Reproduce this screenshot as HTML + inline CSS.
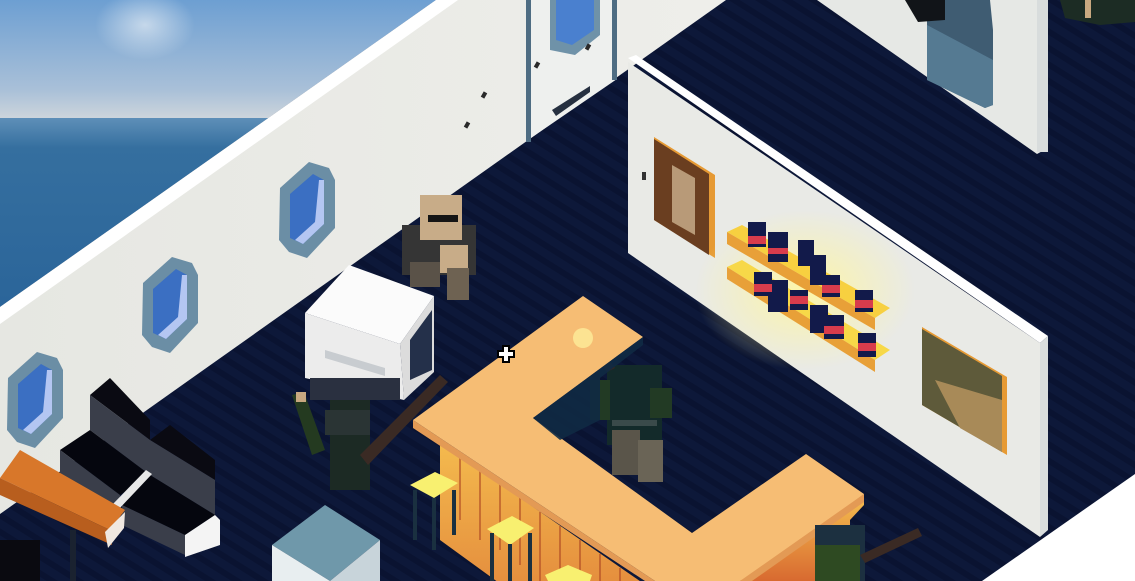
<!DOCTYPE html>
<html><head><meta charset="utf-8"><style>
html,body{margin:0;padding:0;width:1135px;height:581px;overflow:hidden;background:#0c1536}
svg{display:block;overflow:hidden}
</style></head><body>
<svg width="1135" height="581" viewBox="0 0 1135 581" xmlns="http://www.w3.org/2000/svg">
<defs>
<pattern id="fl" patternUnits="userSpaceOnUse" width="14" height="14" patternTransform="rotate(32)">
<rect width="14" height="14" fill="#0d1839"/><rect width="14" height="6" fill="#0a1331"/>
</pattern>
<linearGradient id="sky" x1="0" y1="0" x2="0" y2="1">
<stop offset="0" stop-color="#6d9fd2"/><stop offset="0.75" stop-color="#a9c0d8"/><stop offset="1" stop-color="#cfd6dc"/>
</linearGradient>
<linearGradient id="sea" x1="0" y1="0" x2="0" y2="1">
<stop offset="0" stop-color="#5e8fb8"/><stop offset="0.15" stop-color="#356f9f"/><stop offset="1" stop-color="#2a6499"/>
</linearGradient>
<linearGradient id="wall" x1="0" y1="0" x2="1" y2="0">
<stop offset="0" stop-color="#e6e7e2"/><stop offset="1" stop-color="#eeeeea"/>
</linearGradient>
<radialGradient id="glow" cx="0.5" cy="0.5" r="0.5">
<stop offset="0" stop-color="#fff6a0" stop-opacity="0.9"/><stop offset="1" stop-color="#fff6a0" stop-opacity="0"/>
</radialGradient>
<radialGradient id="cloud" cx="0.5" cy="0.5" r="0.5">
<stop offset="0" stop-color="#e4ecf4" stop-opacity="0.7"/><stop offset="1" stop-color="#e4ecf4" stop-opacity="0"/>
</radialGradient>
<linearGradient id="barf" x1="0" y1="0" x2="0" y2="1">
<stop offset="0" stop-color="#f6c050"/><stop offset="1" stop-color="#d86a30"/>
</linearGradient>
</defs>
<rect width="1135" height="581" fill="url(#fl)"/>
<rect x="0" y="0" width="440" height="120" fill="url(#sky)"/>
<rect x="0" y="118" width="440" height="200" fill="url(#sea)"/>
<ellipse cx="145" cy="25" rx="50" ry="35" fill="url(#cloud)"/>
<polygon points="436,0 1135,0 1135,581 0,581 0,307" fill="url(#fl)"/>
<polygon points="436,0 726,0 0,514 0,307" fill="url(#wall)"/>
<polygon points="436,0 458,0 0,324 0,307" fill="#ffffff"/>
<!-- door -->
<polygon points="528,0 617,0 617,79 528,140" fill="#eef0ee"/>
<rect x="526" y="0" width="5" height="142" fill="#4e6c82"/>
<rect x="612" y="0" width="5" height="80" fill="#4e6c82"/>
<polygon points="550,0 600,0 600,35 575,55 550,50" fill="#6f92a8"/>
<polygon points="556,0 594,0 594,30 572,45 556,40" fill="#4a80cf"/>
<rect x="535" y="62" width="4" height="6" fill="#2a2a2a" transform="rotate(30 537 65)"/>
<rect x="586" y="44" width="4" height="6" fill="#2a2a2a" transform="rotate(30 588 47)"/>
<rect x="482" y="92" width="4" height="6" fill="#2a2a2a" transform="rotate(30 484 95)"/>
<rect x="465" y="122" width="4" height="6" fill="#2a2a2a" transform="rotate(30 467 125)"/>
<polygon points="552,110 590,86 590,92 556,116" fill="#263040"/>
<g id="win" transform="translate(307,210)">
<polygon points="-27,-22 2,-48 22,-42 28,-30 28,18 0,48 -18,42 -28,30" fill="#6b8ea5"/>
<polygon points="-17,-16 6,-36 17,-30 17,14 -4,34 -17,28" fill="#3b6fc2"/>
<polygon points="12,-30 17,-30 17,14 -4,34 -12,30 8,12" fill="#b4c6f2"/>
</g>
<use href="#win" transform="translate(-137,95)"/>
<use href="#win" transform="translate(-272,190)"/>
<!-- upper right partition -->
<polygon points="817,0 1048,0 1048,148 1037,154" fill="#e6e8e5"/>
<rect x="1037" y="0" width="11" height="152" fill="#d8dcdc"/>
<polygon points="927,0 990,0 993,30 993,105 985,108 927,80" fill="#3f5c72"/>
<polygon points="927,25 993,60 993,105 985,108 927,80" fill="#557a92"/>
<polygon points="905,0 945,0 945,20 918,22" fill="#111418"/>
<polygon points="1060,0 1135,0 1135,22 1100,25 1065,18" fill="#1c2c24"/>
<rect x="1085" y="0" width="6" height="18" fill="#c8a880"/>
<!-- center partition -->
<polygon points="628,62 1040,343 1040,537 628,253" fill="#e9eae6"/>
<polygon points="628,58 636,55 1048,336 1040,343" fill="#ffffff"/>
<polygon points="1040,343 1048,336 1048,530 1040,537" fill="#d9dddd"/>
<polygon points="654,137 715,175 715,258 654,220" fill="#e69a34"/>
<polygon points="654,139 709,174 709,255 654,220" fill="#6a3e20"/>
<polygon points="672,165 695,178 695,235 672,222" fill="#b89a78"/>
<rect x="642" y="172" width="4" height="8" fill="#333"/>
<ellipse cx="805" cy="290" rx="110" ry="80" fill="url(#glow)"/>
<polygon points="727,232 742,225 890,308 875,318" fill="#f7d040"/>
<polygon points="727,232 875,318 875,330 727,244" fill="#e8a038"/>
<polygon points="727,267 742,260 890,350 875,360" fill="#f7d848"/>
<polygon points="727,267 875,360 875,372 727,279" fill="#e8a038"/>
<g fill="#121a4a">
<rect x="748" y="222" width="18" height="25"/><rect x="768" y="232" width="20" height="30"/>
<rect x="798" y="240" width="16" height="26"/><rect x="810" y="255" width="16" height="30"/>
<rect x="822" y="275" width="18" height="22"/><rect x="855" y="290" width="18" height="22"/>
<rect x="754" y="272" width="18" height="24"/><rect x="768" y="280" width="20" height="32"/>
<rect x="790" y="290" width="18" height="20"/><rect x="810" y="305" width="18" height="28"/>
<rect x="824" y="315" width="20" height="24"/><rect x="858" y="333" width="18" height="24"/>
</g>
<g fill="#d83c4c">
<rect x="748" y="236" width="18" height="8"/><rect x="768" y="248" width="20" height="6"/>
<rect x="822" y="285" width="18" height="8"/><rect x="855" y="300" width="18" height="8"/>
<rect x="754" y="284" width="18" height="8"/><rect x="790" y="296" width="18" height="8"/>
<rect x="824" y="326" width="20" height="8"/><rect x="858" y="343" width="18" height="8"/>
</g>
<polygon points="922,327 1007,377 1007,455 922,405" fill="#e69a34"/>
<polygon points="922,329 1002,376 1002,452 922,405" fill="#5e5a3a"/>
<polygon points="935,380 1002,400 1002,452 960,428" fill="#a88a58"/>
<polygon points="982,581 1135,474 1135,581" fill="#ffffff"/>
<!-- bald man -->
<rect x="402" y="225" width="74" height="50" fill="#353535"/>
<rect x="420" y="195" width="42" height="45" fill="#c8ac88"/>
<rect x="428" y="215" width="30" height="7" fill="#151515"/>
<rect x="440" y="245" width="28" height="28" fill="#c8ac88"/>
<rect x="410" y="262" width="30" height="25" fill="#5a5248"/>
<rect x="447" y="268" width="22" height="32" fill="#6e6252"/>
<!-- printer -->
<polygon points="305,313 349,265 434,296 400,344" fill="#fbfbfb"/>
<polygon points="305,313 400,344 404,400 305,378" fill="#ececec"/>
<polygon points="400,344 434,296 434,372 404,400" fill="#dcdcdc"/>
<polygon points="410,340 432,310 432,370 410,380" fill="#24304a"/>
<polygon points="325,350 385,368 385,376 325,358" fill="#c8ccd0"/>
<rect x="310" y="378" width="90" height="22" fill="#2a3040"/>
<!-- soldier left -->
<rect x="330" y="400" width="40" height="90" fill="#1c2a24"/>
<rect x="325" y="410" width="45" height="25" fill="#2a3434"/>
<polygon points="292,395 304,392 325,450 312,455" fill="#243a20"/>
<polygon points="360,455 440,375 448,382 368,465" fill="#3a2a24"/>
<rect x="296" y="392" width="10" height="10" fill="#c8a880"/>
<!-- soldier behind bar -->
<rect x="607" y="365" width="55" height="80" fill="#132a2a"/>
<rect x="590" y="380" width="20" height="40" fill="#223a24"/>
<rect x="650" y="388" width="22" height="30" fill="#223a24"/>
<rect x="612" y="430" width="28" height="45" fill="#5a554a"/>
<rect x="638" y="440" width="25" height="42" fill="#6a6456"/>
<rect x="612" y="420" width="45" height="6" fill="#3a4a4a"/>
<polygon points="585,342 592,337 615,368 607,372" fill="#3a2420"/>
<!-- bar -->
<polygon points="415,425 660,595 660,700 440,540 440,445" fill="url(#barf)"/>
<g stroke="#b04a24" stroke-width="2" opacity="0.6">
<line x1="460" y1="455" x2="460" y2="520"/><line x1="480" y1="470" x2="480" y2="540"/>
<line x1="500" y1="484" x2="500" y2="550"/><line x1="520" y1="498" x2="520" y2="565"/>
<line x1="540" y1="512" x2="540" y2="581"/><line x1="560" y1="526" x2="560" y2="581"/>
<line x1="580" y1="540" x2="580" y2="581"/><line x1="600" y1="554" x2="600" y2="581"/>
<line x1="620" y1="568" x2="620" y2="581"/>
</g>
<polygon points="864,494 864,505 850,520 850,581 740,581" fill="url(#barf)"/>
<polygon points="413,420 583,296 643,337 533,418 692,533 806,454 864,494 760,570 740,581 655,581" fill="#f6bd74"/>
<polygon points="413,420 655,581 645,581 413,428" fill="#e39a55"/>
<polygon points="864,494 864,502 752,581 740,581" fill="#e39a55"/>
<polygon points="533,418 643,337 643,345 600,378 600,420 560,440" fill="#0f2a44" opacity="0.9"/>
<circle cx="583" cy="338" r="10" fill="#fff4a0" opacity="0.7"/>
<!-- stools -->
<polygon points="410,485 435,472 458,483 434,498" fill="#f8f070"/>
<rect x="413" y="490" width="4" height="50" fill="#1a3040"/><rect x="432" y="498" width="4" height="52" fill="#1a3040"/><rect x="452" y="490" width="4" height="45" fill="#1a3040"/>
<polygon points="487,529 512,516 534,528 510,545" fill="#f8f070"/>
<rect x="490" y="533" width="4" height="48" fill="#1a3040"/><rect x="508" y="544" width="4" height="37" fill="#1a3040"/><rect x="528" y="533" width="4" height="48" fill="#1a3040"/>
<polygon points="545,575 568,565 592,575 590,581 548,581" fill="#f8f070"/>
<!-- soldier bottom right -->
<rect x="815" y="525" width="50" height="56" fill="#1c3040"/>
<rect x="815" y="545" width="45" height="36" fill="#2e4a22"/>
<polygon points="860,555 918,528 922,536 865,563" fill="#3a2a24"/>
<!-- chairs -->
<polygon points="90,395 110,378 150,420 150,440" fill="#0a0a12"/>
<polygon points="90,395 150,440 150,475 90,430" fill="#3a3e4a"/>
<polygon points="60,450 90,430 150,475 120,495" fill="#05060e"/>
<polygon points="60,450 120,495 120,520 60,475" fill="#3a3e4a"/>
<polygon points="150,440 170,425 215,460 215,480" fill="#0a0a12"/>
<polygon points="150,440 215,480 215,515 150,475" fill="#3a3e4a"/>
<polygon points="122,505 150,475 215,515 185,535" fill="#05060e"/>
<polygon points="122,505 185,535 185,555 122,525" fill="#3a3e4a"/>
<polygon points="185,535 215,515 220,520 220,545 185,557" fill="#f4f4f4"/>
<polygon points="112,505 146,470 152,474 118,510" fill="#e8e8e8"/>
<polygon points="0,478 20,450 125,510 110,530" fill="#d8772a"/>
<polygon points="0,478 110,530 112,545 0,495" fill="#b85e1e"/>
<polygon points="105,532 125,512 124,528 108,548" fill="#f0e8e0"/>
<rect x="70" y="530" width="6" height="51" fill="#1a2230"/>
<rect x="0" y="540" width="40" height="41" fill="#0a0a10"/>
<polygon points="272,545 325,505 380,540 330,581" fill="#6f98aa"/>
<polygon points="272,545 330,581 272,581" fill="#e8eef0"/>
<polygon points="330,581 380,540 380,581" fill="#c8d4da"/>
<g fill="#000"><rect x="497" y="350" width="18" height="8"/><rect x="502" y="345" width="8" height="18"/></g>
<g fill="#fff"><rect x="499" y="352" width="14" height="4"/><rect x="504" y="347" width="4" height="14"/></g>
</svg>
</body></html>
